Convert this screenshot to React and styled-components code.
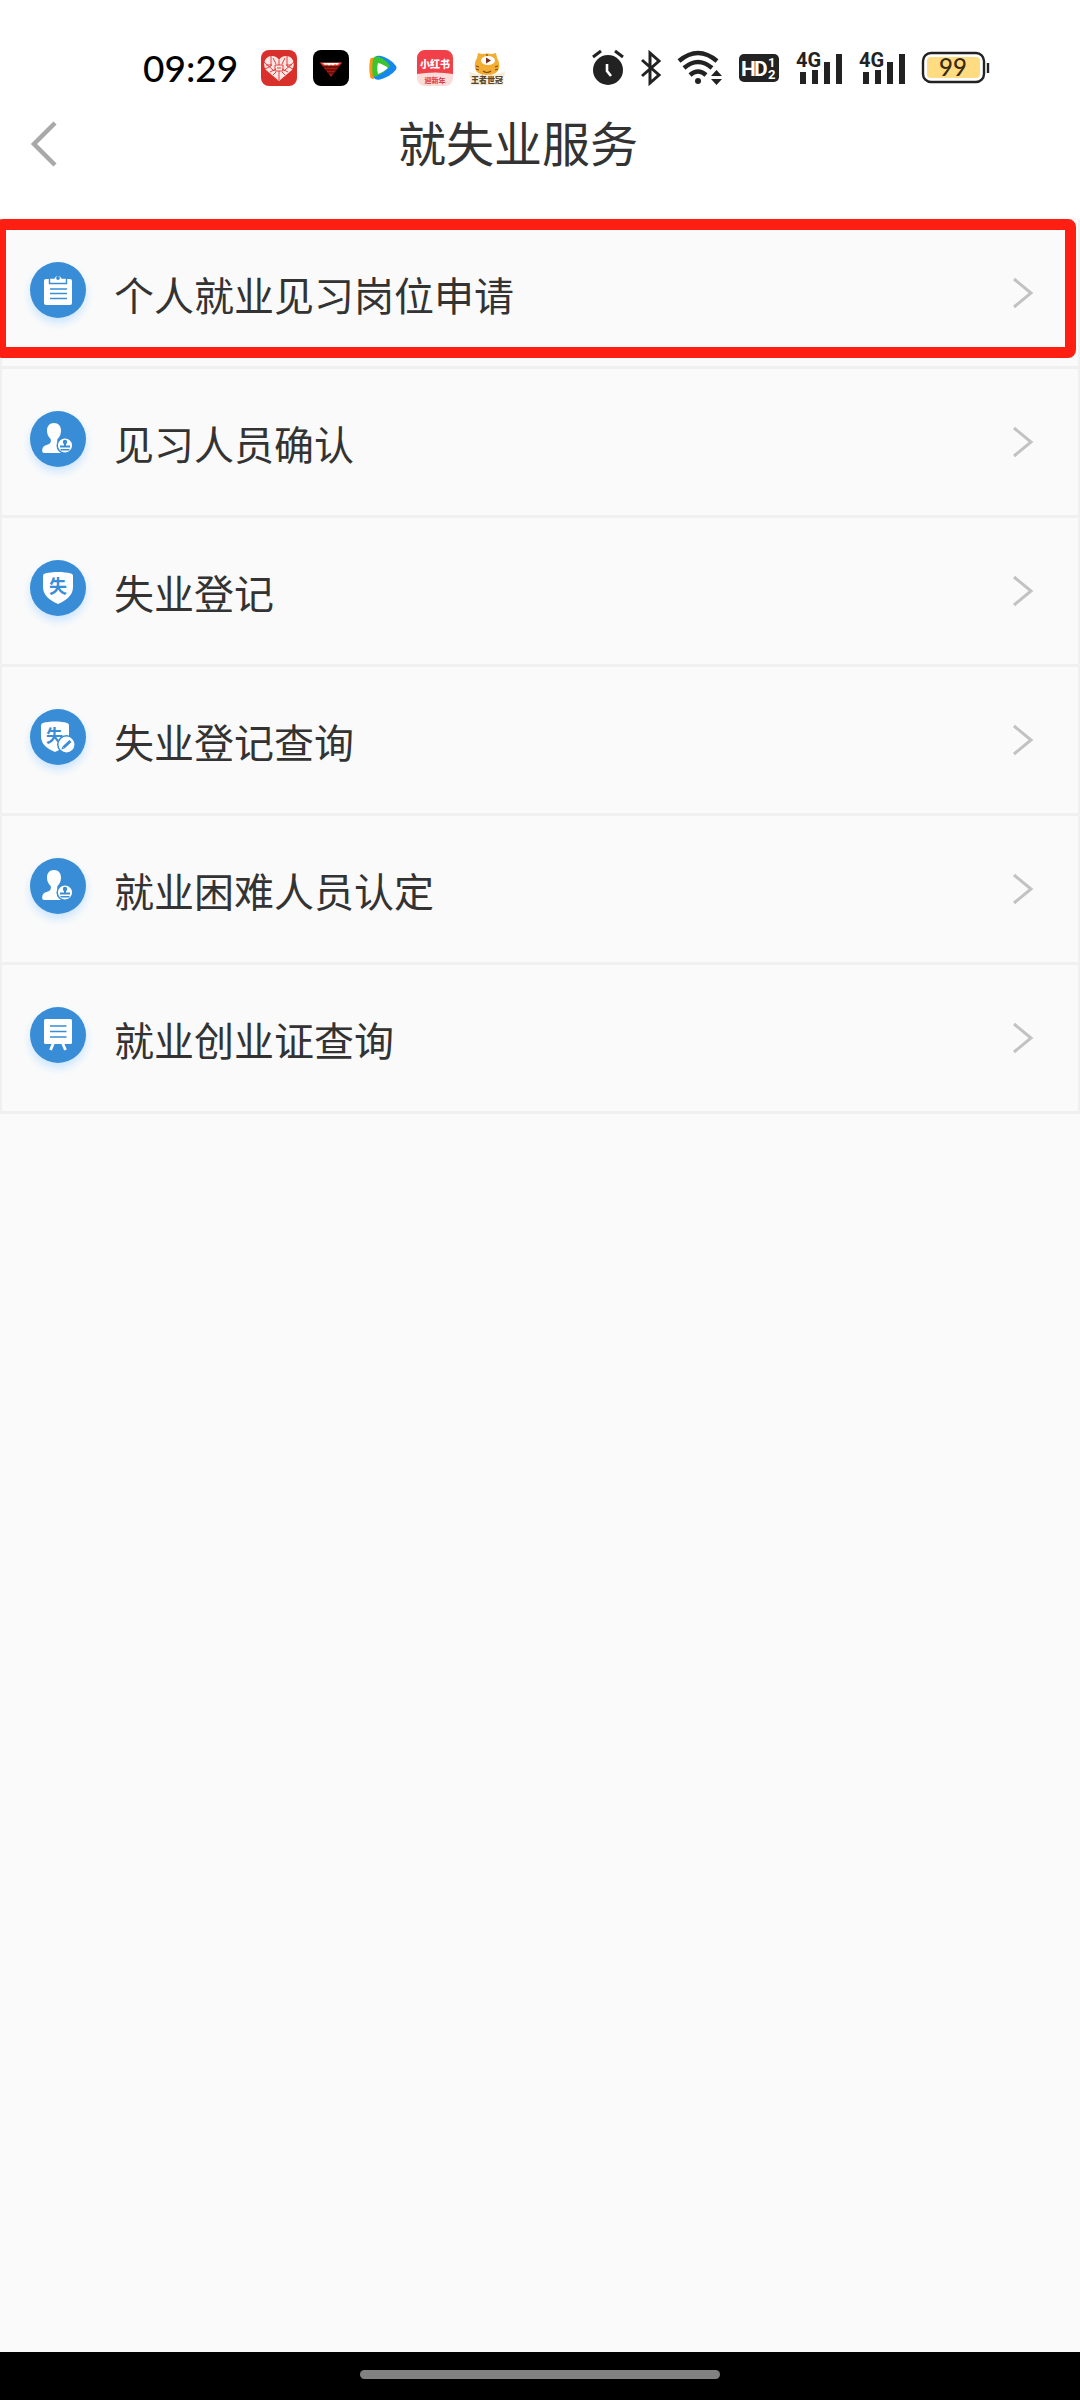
import React from "react";
import styled, { createGlobalStyle } from "styled-components";

const CJK = `"Noto Sans CJK SC", "Noto Sans", sans-serif`;

const GlobalStyle = createGlobalStyle`
  * { box-sizing: border-box; }
  body { margin: 0; background: #fafafa; color: #333; font-family: ${CJK}; }
`;

const Screen = styled.div`
  display: flex;
  flex-direction: column;
  min-height: 100vh;
`;

const StatusBar = styled.div`
  display: flex;
  align-items: center;
  justify-content: space-between;
  height: 104px;
  padding: 32px 90px 0 143px;
  background: #fff;
`;

const StatusGroup = styled.div`
  display: flex;
  align-items: center;
  gap: ${(p) => p.$gap}px;
`;

const Clock = styled.time`
  margin-right: 7px;
  font: 500 37px/40px Lato, sans-serif;
  color: #000;
`;

const Glyph = styled.svg`
  display: block;
  flex: none;
  overflow: visible;
`;

const Header = styled.header`
  display: grid;
  grid-template-columns: 88px 1fr 132px;
  align-items: center;
  height: 114px;
  padding-bottom: 34px;
  background: #fff;
`;

const BackButton = styled.button`
  display: flex;
  padding: 8px 30px;
  border: 0;
  background: none;
  cursor: pointer;
`;

const Title = styled.h1`
  margin: 0;
  padding-bottom: 6px;
  font-size: 48px;
  font-weight: 400;
  line-height: 64px;
  text-align: center;
`;

const Main = styled.main`
  flex: 1;
  padding-top: 2px;
  background: #fafafa;
`;

const List = styled.ul`
  margin: 0;
  padding: 0;
  list-style: none;
  border: solid #f0f0f0;
  border-width: 0 2px;
`;

const Item = styled.li`
  position: relative;
  border-bottom: 3px solid #f0f0f0;
`;

const Highlight = styled.span`
  position: absolute;
  inset: -1px 2px 8px -7px;
  border: 11px solid #ff1f12;
  border-radius: 8px;
  pointer-events: none;
`;

const RowLink = styled.a`
  display: flex;
  align-items: center;
  height: 146px;
  padding: 0 45px 0 28px;
  color: inherit;
  text-decoration: none;
`;

const Badge = styled.span`
  display: flex;
  margin-bottom: 6px;
  border-radius: 50%;
  background: #388dd6;
  box-shadow: 0 5px 8px #cbe5ff;
`;

const Label = styled.span`
  flex: 1;
  padding: 2px 0 0 28px;
  font-size: 40px;
  line-height: 56px;
`;

const NavBar = styled.footer`
  display: flex;
  justify-content: center;
  align-items: center;
  height: 48px;
  padding-bottom: 3px;
  background: #000;
`;

const HomePill = styled.span`
  width: 40%;
  max-width: 360px;
  height: 9px;
  border-radius: 5px;
  background: #818181;
`;

const BLUE = "#388dd6";
const INK = "#222";

function ClipboardIcon() {
  return (
    <Glyph width="56" height="56" viewBox="0 0 56 56" aria-hidden="true">
      <rect x="14" y="17" width="28" height="26" rx="2" fill="#fff" />
      <path d="M19.500 16h4.500a4.300 4.300 0 0 1 8 0h4.500v5.500h-17z" fill="#fff" stroke={BLUE} strokeWidth="1.400" />
      <circle cx="28" cy="16" r="1.900" fill={BLUE} />
      <path d="M20 27h17M20 31.500h17M20 36.500h17" stroke={BLUE} strokeWidth="1.300" />
    </Glyph>
  );
}

function PersonIcon() {
  return (
    <Glyph width="56" height="56" viewBox="0 0 56 56" aria-hidden="true">
      <path d="M24 12c4.500 0 7.200 3.500 7 8-.2 4-1.600 6-3.500 8-1 3 .5 4.500 4 6v8H14.500c-2 0-2.500-1-2.300-3 .3-3 1.800-4.200 5-5.200 3-1 4.300-2.800 3.500-5.800-2-2-3.500-4-3.700-8-.2-4.500 2.500-8 7-8z" fill="#fff" />
      <circle cx="35" cy="34.500" r="7.800" fill="#fff" stroke={BLUE} strokeWidth="1.500" />
      <circle cx="35" cy="31" r="2.200" fill={BLUE} />
      <path d="M34 32h2v2.500h4v2h-10v-2h4zM30.500 38h9v1.500h-9z" fill={BLUE} />
    </Glyph>
  );
}

function ShieldIcon() {
  return (
    <Glyph width="56" height="56" viewBox="0 0 56 56" aria-hidden="true">
      <path d="M28 12c5 0 9 .5 13 1.500 1.500.5 2 1.200 2 3V27c0 8-6 13-15 17-9-4-15-9-15-17V16.500c0-1.800.5-2.500 2-3 4-1 8-1.500 13-1.500z" fill="#fff" />
      <text x="28" y="33" textAnchor="middle" fontSize="18" fontWeight="700" fontFamily={CJK} fill={BLUE}>失</text>
    </Glyph>
  );
}

function ShieldEditIcon() {
  return (
    <Glyph width="56" height="56" viewBox="0 0 56 56" aria-hidden="true">
      <path d="M25 12.500c5 0 9 .5 12 1.500 1.500.5 2 1.200 2 3v10c0 8-5 12-14 16-9-4-14-8-14-16V17c0-1.800.5-2.500 2-3 3-1 7-1.500 12-1.500z" fill="#fff" />
      <text x="24.500" y="33" textAnchor="middle" fontSize="17" fontWeight="700" fontFamily={CJK} fill={BLUE}>失</text>
      <circle cx="36.500" cy="35.500" r="8.700" fill="#fff" stroke={BLUE} strokeWidth="1.500" />
      <path d="M33.500 38.500l7-6.500" stroke={BLUE} strokeWidth="3" />
      <path d="M31.500 40.500l.8-3 2 2z" fill={BLUE} />
    </Glyph>
  );
}

function BoardIcon() {
  return (
    <Glyph width="56" height="56" viewBox="0 0 56 56" aria-hidden="true">
      <rect x="14" y="12" width="28" height="25" rx="1.500" fill="#fff" />
      <path d="M20 19h16.500M20 24.500h16.500M20 30h16.500" stroke={BLUE} strokeWidth="1.700" />
      <path d="M23.500 36l-3 7M32.500 36l3 7" stroke="#fff" strokeWidth="2.800" />
    </Glyph>
  );
}

function Chevron() {
  return (
    <Glyph width="20" height="30" viewBox="0 0 20 30" aria-hidden="true">
      <path d="M1 1l17 14L1 29" fill="none" stroke="#c2c2c2" strokeWidth="3" />
    </Glyph>
  );
}

function HeartApp() {
  return (
    <Glyph width="36" height="36" viewBox="0 0 36 36" aria-hidden="true">
      <rect width="36" height="36" rx="8" fill="#d9302c" />
      <path d="M18 31L5 20C1 14 4 6 11 6c3 0 5.500 1.500 7 4 1.500-2.500 4-4 7-4 7 0 10 8 6 14z" fill="#fde6e4" />
      <path d="M18 10v5M18 21v9M10 6v10l-6 3M26 6v10l6 3M3 12l10 9M33 12l-10 9M9 22l6-3M27 22l-6-3M12 25l3-3M24 25l-3-3M12 8l3 6M24 8l-3 6M14 15h8v6h-8zM16 18h4M5 15h6M25 15h6" fill="none" stroke="#d9302c" strokeWidth="0.900" />
    </Glyph>
  );
}

function DarkApp() {
  return (
    <Glyph width="36" height="36" viewBox="0 0 36 36" aria-hidden="true">
      <rect width="36" height="36" rx="8" fill="#000" />
      <path d="M7 13h22L18 27z" fill="#a51c14" />
      <path d="M10 17h16M12 20h12M15 23h6" stroke="#3a0502" strokeWidth="1.200" />
      <path d="M7 12.500h22l-4 3H11z" fill="#ff5b43" />
      <path d="M10 13h16l-2 2-2-1-2 1.500-2-1-2 1-2-1-2 .5z" fill="#fff" />
    </Glyph>
  );
}

function PlayApp() {
  return (
    <Glyph width="36" height="36" viewBox="-4 -5 36 36" aria-hidden="true">
      <path d="M1 6c0-3 1-4 4-3v21c-3 0-4-1-4-4C0 15 0 11 1 6z" fill="#ff9417" />
      <path d="M5 4c1-3 3-4 7-3 7 2 11 5 15 10 .6 1 .5 2.500 0 3.500-4 5-9 8-16 10-3 .6-5 0-6-2z" fill="#1687ee" />
      <path d="M4 4c1-3 3-3 6-2 5 2 8 4 11 9l-6 6-7 4-4 1C3 17 3 10 4 4z" fill="#3bc52f" />
      <path d="M9 8c4 1 7 2.500 10 5-3 2.500-6 4.500-10 6-1-4-1-7 0-11z" fill="#fff" />
    </Glyph>
  );
}

function RedBookApp() {
  return (
    <Glyph width="36" height="36" viewBox="0 0 36 36" aria-hidden="true">
      <rect width="36" height="36" rx="8" fill="#fbdcd9" />
      <path d="M0 24V8a8 8 0 0 1 8-8h20a8 8 0 0 1 8 8v16q-18-3-36 0z" fill="#f0414a" />
      <text x="18" y="18" textAnchor="middle" fontSize="10" fontWeight="900" fontFamily={CJK} fill="#fff">小红书</text>
      <text x="18" y="33" textAnchor="middle" fontSize="7" fontWeight="900" fontFamily={CJK} fill="#e2434a">迎新年</text>
    </Glyph>
  );
}

function TigerApp() {
  return (
    <Glyph width="36" height="36" viewBox="0 0 36 36" aria-hidden="true">
      <path d="M0 22q18 5 36 0l-2 13H2z" fill="#f6ecd8" />
      <path d="M9 3l4 1q5-1 10 0l4-1 1 5q3 5 2 10-1 7-12 7-11 0-12-7-1-5 2-10z" fill="#f3ad32" />
      <path d="M18 4v2M7 16l3 1M7 19l3 1M29 16l-3 1M29 19l-3 1M14 21q4 3 8 0" fill="none" stroke="#7a4a16" strokeWidth="1.200" />
      <ellipse cx="19" cy="10.500" rx="7" ry="4.500" fill="#fff" />
      <path d="M17 7.500l5 3-5 3z" fill="#7a3018" />
      <text x="18" y="33" textAnchor="middle" fontSize="8" fontWeight="900" fontFamily={CJK} fill="#554730">王者世冠</text>
    </Glyph>
  );
}

function AlarmIcon() {
  return (
    <Glyph width="32" height="36" viewBox="0 0 32 36" aria-hidden="true">
      <circle cx="16" cy="20" r="15" fill={INK} />
      <path d="M1 7l8-6M31 7l-8-6" stroke={INK} strokeWidth="3" />
      <path d="M15 14v7l4 5" fill="none" stroke="#fff" strokeWidth="2.600" />
    </Glyph>
  );
}

function BluetoothIcon() {
  return (
    <Glyph width="20" height="34" viewBox="0 0 20 34" aria-hidden="true">
      <path d="M1 9l17 15-9 8V2l9 8L1 25" fill="none" stroke={INK} strokeWidth="3" />
    </Glyph>
  );
}

function WifiIcon() {
  return (
    <Glyph width="44" height="34" viewBox="0 0 44 34" aria-hidden="true">
      <path d="M1 10q19-16 38 0M6 17q14-12 28 0M12 24q8-7 16 0" fill="none" stroke={INK} strokeWidth="4.400" />
      <circle cx="20" cy="30" r="3" fill={INK} />
      <path d="M33 25l5.500-6 5.500 6zM33 28h11l-5.500 6z" fill={INK} />
    </Glyph>
  );
}

function HdIcon() {
  return (
    <Glyph width="40" height="28" viewBox="0 0 40 28" aria-hidden="true">
      <rect width="40" height="28" rx="5" fill={INK} />
      <g fill="#fff" fontFamily="Roboto, sans-serif" fontWeight="700">
        <text x="2" y="22" fontSize="21">H</text>
        <text x="15" y="22" fontSize="21">D</text>
        <text x="29" y="13" fontSize="13">1</text>
        <text x="29" y="25" fontSize="13">2</text>
      </g>
    </Glyph>
  );
}

function SignalIcon() {
  return (
    <Glyph width="46" height="34" viewBox="0 0 46 34" aria-hidden="true">
      <path d="M7 21v12M19 19v14M31 11v22M43 3v30" stroke={INK} strokeWidth="6" />
      <text x="0" y="16" fontSize="20" fontWeight="700" fontFamily="Roboto, sans-serif" fill={INK} stroke="#fff" strokeWidth="2" paintOrder="stroke">4G</text>
    </Glyph>
  );
}

function BatteryIcon() {
  return (
    <Glyph width="68" height="32" viewBox="0 0 68 32" aria-hidden="true">
      <rect x="1" y="1" width="61" height="29" rx="8" fill="#fff" stroke={INK} strokeWidth="2.400" />
      <rect x="5" y="5" width="53" height="21" rx="4" fill="#ffdc82" />
      <path d="M66 11v10" stroke={INK} strokeWidth="2.400" />
      <text x="31" y="24" textAnchor="middle" fontSize="24" fontWeight="500" fontFamily="Lato, sans-serif" fill="#3a2a10">99</text>
    </Glyph>
  );
}

const services = [
  { label: "个人就业见习岗位申请", Icon: ClipboardIcon, highlighted: true },
  { label: "见习人员确认", Icon: PersonIcon },
  { label: "失业登记", Icon: ShieldIcon },
  { label: "失业登记查询", Icon: ShieldEditIcon },
  { label: "就业困难人员认定", Icon: PersonIcon },
  { label: "就业创业证查询", Icon: BoardIcon },
];

export default function App() {
  return (
    <Screen>
      <GlobalStyle />
      <StatusBar>
        <StatusGroup $gap={16}>
          <Clock>09:29</Clock>
          <HeartApp />
          <DarkApp />
          <PlayApp />
          <RedBookApp />
          <TigerApp />
        </StatusGroup>
        <StatusGroup $gap={17}>
          <AlarmIcon />
          <BluetoothIcon />
          <WifiIcon />
          <HdIcon />
          <SignalIcon />
          <SignalIcon />
          <BatteryIcon />
        </StatusGroup>
      </StatusBar>
      <Header>
        <BackButton type="button" aria-label="返回">
          <Glyph width="28" height="44" viewBox="0 0 28 44" aria-hidden="true">
            <path d="M25 1L4 22l21 21" fill="none" stroke="#a8a8aa" strokeWidth="4.500" />
          </Glyph>
        </BackButton>
        <Title>就失业服务</Title>
      </Header>
      <Main>
        <List>
          {services.map(({ label, Icon, highlighted }) => (
            <Item key={label}>
              <RowLink href="#">
                <Badge><Icon /></Badge>
                <Label>{label}</Label>
                <Chevron />
              </RowLink>
              {highlighted && <Highlight />}
            </Item>
          ))}
        </List>
      </Main>
      <NavBar>
        <HomePill />
      </NavBar>
    </Screen>
  );
}
